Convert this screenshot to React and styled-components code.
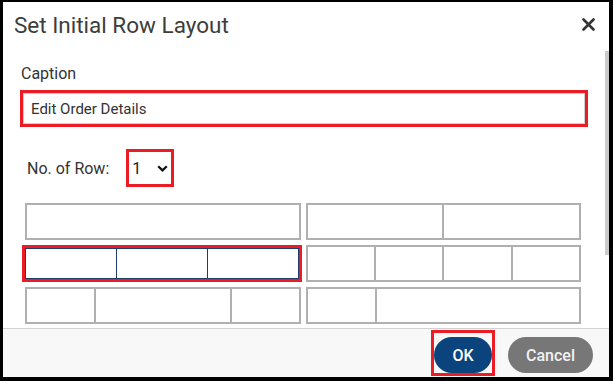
import React from 'react'
import styled, { createGlobalStyle } from 'styled-components'

const GlobalStyle = createGlobalStyle`
    html, body {
        margin: 0;
        padding: 0;
        background: #ffffff;
    }
    * {
        box-sizing: border-box;
    }
`;

const Dialog = styled.div`
    position: relative;
    width: 613px;
    height: 381px;
    display: flex;
    flex-direction: column;
    background: #ffffff;
    border-style: solid;
    border-color: #000000;
    border-width: 2px 4px 4px 3px;
    font-family: Roboto, "Liberation Sans", sans-serif;
    overflow: hidden;
`;

const Header = styled.div`
    height: 49px;
    flex-shrink: 0;
    display: flex;
    align-items: center;
    justify-content: space-between;
    padding: 0 14px 4px 11px;
`;

const Title = styled.h2`
    margin: 0;
    font-size: 22.5px;
    font-weight: 400;
    color: #3d3d3d;
`;

const CloseButton = styled.button`
    border: none;
    background: none;
    padding: 0;
    width: 13px;
    height: 13px;
    display: flex;
    cursor: pointer;
`;

const Body = styled.div`
    flex: 1;
    overflow: hidden;
    padding: 13px 21px 20px 17px;
`;

// scroll thumb of the body, drawn over the right edge
const ScrollThumb = styled.div`
    position: absolute;
    top: 49px;
    right: 0;
    width: 4px;
    height: 204px;
    background: #cbcbcb;
`;

const Label = styled.label`
    display: block;
    font-size: 16px;
    color: #333333;
    padding-left: 1px;
`;

const Marked = styled.div`
    border: 3px solid #ec1c24;
`;

const CaptionBox = styled(Marked)`
    margin-top: 7px;
`;

const TextInput = styled.input`
    display: block;
    width: 100%;
    height: 31px;
    border: 1px solid #cfcfcf;
    padding: 0 7px;
    font-family: Roboto, "Liberation Sans", sans-serif;
    font-size: 15px;
    color: #333333;
    outline: none;
`;

const Section = styled.div`
    padding: 0 7px 0 5px;
`;

const RowCount = styled.div`
    display: flex;
    align-items: center;
    gap: 17px;
    margin-top: 22px;
    padding-left: 1px;
`;

const SelectBox = styled(Marked)`
    width: 48px;
    height: 38px;
    display: flex;
    align-items: center;
    justify-content: space-between;
    padding: 0 3px 0 3px;
    font-size: 16px;
    color: #222222;
`;

const Grid = styled.div`
    display: grid;
    grid-template-columns: 1fr 1fr;
    column-gap: 5px;
    margin-top: 16px;
`;

const Column = styled.div`
    display: flex;
    flex-direction: column;
    gap: 5px;
`;

const Row = styled.div`
    height: 37px;
    flex-shrink: 0;
    display: flex;
    border: 2px solid #b0b0b0;
`;

const Cell = styled.div`
    flex: ${p => p.$span};
    & + & {
        border-left: 2px solid #b0b0b0;
    }
`;

const ActiveRow = styled(Marked)`
    height: 37px;
    flex-shrink: 0;
    margin: 0 -1px 0 -3px;
    display: flex;
`;

const ActiveInner = styled.div`
    flex: 1;
    display: flex;
    border: 1px solid #1d3b6b;
`;

const ActiveCell = styled.div`
    flex: 1;
    & + & {
        border-left: 1px solid #1d3b6b;
    }
`;

const Footer = styled.div`
    height: 49px;
    flex-shrink: 0;
    display: flex;
    align-items: flex-start;
    justify-content: flex-end;
    gap: 13px;
    padding: 1px 16px 0 0;
    border-top: 1px solid #d2d2d2;
    background: #f8f8f8;
`;

const OkMark = styled(Marked)`
    padding-top: 4px;
    height: 46px;
`;

const Pill = styled.button`
    height: 36px;
    border: none;
    border-radius: 18px;
    font-family: Roboto, "Liberation Sans", sans-serif;
    font-size: 16px;
    font-weight: 500;
    cursor: pointer;
    background: ${p => (p.$primary ? '#0b447c' : '#777777')};
    color: ${p => (p.$primary ? '#ffffff' : '#f2f2f2')};
    width: ${p => (p.$primary ? '58px' : '85px')};
`;

const CancelWrap = styled.div`
    padding-top: 7px;
`;

const CloseIcon = () => (
    <svg width="13" height="13" viewBox="0 0 13 13">
        <path d="M1.5 1.5 L11.5 11.5 M11.5 1.5 L1.5 11.5" stroke="#333" strokeWidth="2.6" strokeLinecap="round" />
    </svg>
);

const Chevron = () => (
    <svg width="11" height="7" viewBox="0 0 11 7">
        <path d="M1.2 1.2 L5.5 5.4 L9.8 1.2" fill="none" stroke="#111" strokeWidth="2.2" />
    </svg>
);

const leftRows = [[1], null, [1, 2, 1], [2, 1], [1]];
const rightRows = [[1, 1], [1, 1, 1, 1], [1, 3], [1, 1, 2], [1, 1]];

const LayoutRow = ({ cells }) => (
    <Row>
        {cells.map((span, i) => (
            <Cell key={i} $span={span} />
        ))}
    </Row>
);

export default function App() {
    return (
        <>
            <GlobalStyle />
            <Dialog>
                <Header>
                    <Title>Set Initial Row Layout</Title>
                    <CloseButton aria-label="Close">
                        <CloseIcon />
                    </CloseButton>
                </Header>
                <Body>
                    <Label>Caption</Label>
                    <CaptionBox>
                        <TextInput defaultValue="Edit Order Details" />
                    </CaptionBox>
                    <Section>
                        <RowCount>
                            <Label>No. of Row:</Label>
                            <SelectBox>
                                <span>1</span>
                                <Chevron />
                            </SelectBox>
                        </RowCount>
                        <Grid>
                            <Column>
                                {leftRows.map((cells, i) =>
                                    cells ? (
                                        <LayoutRow key={i} cells={cells} />
                                    ) : (
                                        <ActiveRow key={i}>
                                            <ActiveInner>
                                                <ActiveCell />
                                                <ActiveCell />
                                                <ActiveCell />
                                            </ActiveInner>
                                        </ActiveRow>
                                    )
                                )}
                            </Column>
                            <Column>
                                {rightRows.map((cells, i) => (
                                    <LayoutRow key={i} cells={cells} />
                                ))}
                            </Column>
                        </Grid>
                    </Section>
                </Body>
                <ScrollThumb />
                <Footer>
                    <OkMark>
                        <Pill $primary>OK</Pill>
                    </OkMark>
                    <CancelWrap>
                        <Pill>Cancel</Pill>
                    </CancelWrap>
                </Footer>
            </Dialog>
        </>
    );
}
